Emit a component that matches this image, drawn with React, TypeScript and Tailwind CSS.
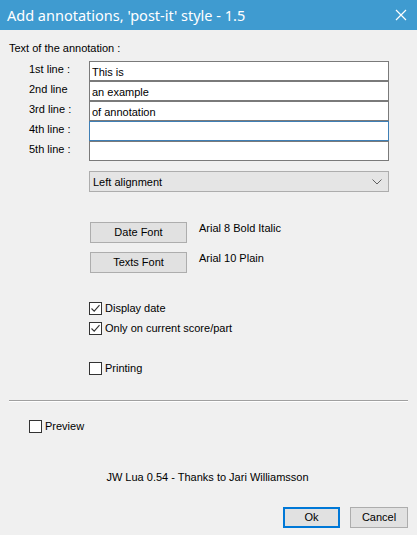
import React from "react";

const LINES = [
  { label: "1st line :", value: "This is" },
  { label: "2nd line", value: "an example" },
  { label: "3rd line :", value: "of annotation" },
  { label: "4th line :", value: "", focused: true },
  { label: "5th line :", value: "" },
];

function CheckBox({ checked, label }: { checked?: boolean; label: string }) {
  return (
    <div className="flex items-center h-[15px]">
      <span className="w-[13px] h-[13px] border border-[#333333] bg-white flex items-center justify-center shrink-0">
        {checked && (
          <svg width="11" height="11" viewBox="0 0 11 11" fill="none">
            <path d="M1.5 5.5 L4.2 8.2 L9.5 2.2" stroke="#333333" strokeWidth="1.1" />
          </svg>
        )}
      </span>
      <span className="ml-[3px] leading-none">{label}</span>
    </div>
  );
}

function WinButton({ children, primary }: { children: React.ReactNode; primary?: boolean }) {
  return (
    <button
      className={
        "h-[21px] bg-[#e1e1e1] text-black leading-none " +
        (primary ? "border-2 border-[#0078d7]" : "border border-[#adadad]")
      }
    >
      {children}
    </button>
  );
}

export default function App() {
  return (
    <div
      className="w-[417px] h-[535px] bg-[#f0f0f0] text-[11px] text-black flex flex-col overflow-hidden"
      style={{ fontFamily: '"Liberation Sans", Arial, sans-serif' }}
    >
      {/* Title bar */}
      <div className="h-[30px] bg-[#3f9bd0] flex items-center justify-between pl-[7px] pr-[7px] shrink-0">
        <span
          className="text-white text-[14.5px] leading-none"
          style={{ fontFamily: '"Noto Sans", sans-serif' }}
        >
          Add annotations, 'post-it' style - 1.5
        </span>
        <svg width="12" height="12" viewBox="0 0 12 12" className="mr-[3px]">
          <path d="M1 1 L11 11 M11 1 L1 11" stroke="white" strokeWidth="1.2" />
        </svg>
      </div>

      <div className="flex flex-col pl-[9px] pr-[9px]">
        <div className="mt-[13px] leading-none h-[12px]">Text of the annotation :</div>

        {/* Line inputs */}
        <div className="mt-[6px] flex flex-col">
          {LINES.map((l) => (
            <div key={l.label} className="flex items-start h-[20px]">
              <span className="w-[80px] pl-[20px] pt-[3px] leading-none">{l.label}</span>
              <div
                className={
                  "w-[300px] h-[20px] bg-white border flex items-center pl-[2px] pt-[3px] " +
                  (l.focused ? "border-[#3f7fb5]" : "border-[#7a7a7a]")
                }
              >
                {l.value}
              </div>
            </div>
          ))}
        </div>

        {/* Alignment select */}
        <div className="mt-[10px] ml-[80px] w-[300px] h-[21px] bg-[#e5e5e5] border border-[#adadad] flex items-center justify-between pl-[3px] pr-[6px]">
          <span className="leading-none pt-[1px]">Left alignment</span>
          <svg width="10" height="6" viewBox="0 0 10 6" fill="none">
            <path d="M0.5 0.5 L5 5 L9.5 0.5" stroke="#606060" strokeWidth="1" />
          </svg>
        </div>

        {/* Font buttons */}
        <div className="mt-[30px] ml-[81px] flex flex-col gap-[9px]">
          <div className="flex items-start">
            <div className="w-[97px] flex flex-col">
              <WinButton>Date Font</WinButton>
            </div>
            <span className="ml-[12px] mt-[1px] leading-none">Arial 8 Bold Italic</span>
          </div>
          <div className="flex items-start">
            <div className="w-[97px] flex flex-col">
              <WinButton>Texts Font</WinButton>
            </div>
            <span className="ml-[12px] mt-[1px] leading-none">Arial 10 Plain</span>
          </div>
        </div>

        {/* Options */}
        <div className="mt-[28px] ml-[80px] flex flex-col gap-[5px]">
          <CheckBox checked label="Display date" />
          <CheckBox checked label="Only on current score/part" />
          <div className="mt-[20px]">
            <CheckBox label="Printing" />
          </div>
        </div>

        {/* Separator */}
        <div className="mt-[24px] h-[2px] border-t border-[#a0a0a0] border-b border-b-white" />

        <div className="mt-[17px] ml-[20px]">
          <CheckBox label="Preview" />
        </div>

        <div className="mt-[38px] text-center leading-none pr-[2px]">JW Lua 0.54 - Thanks to Jari Williamsson</div>

        <div className="mt-[24px] flex justify-end gap-[10px]">
          <div className="w-[57px] flex flex-col">
            <WinButton primary>Ok</WinButton>
          </div>
          <div className="w-[58px] flex flex-col">
            <WinButton>Cancel</WinButton>
          </div>
        </div>
      </div>
    </div>
  );
}
